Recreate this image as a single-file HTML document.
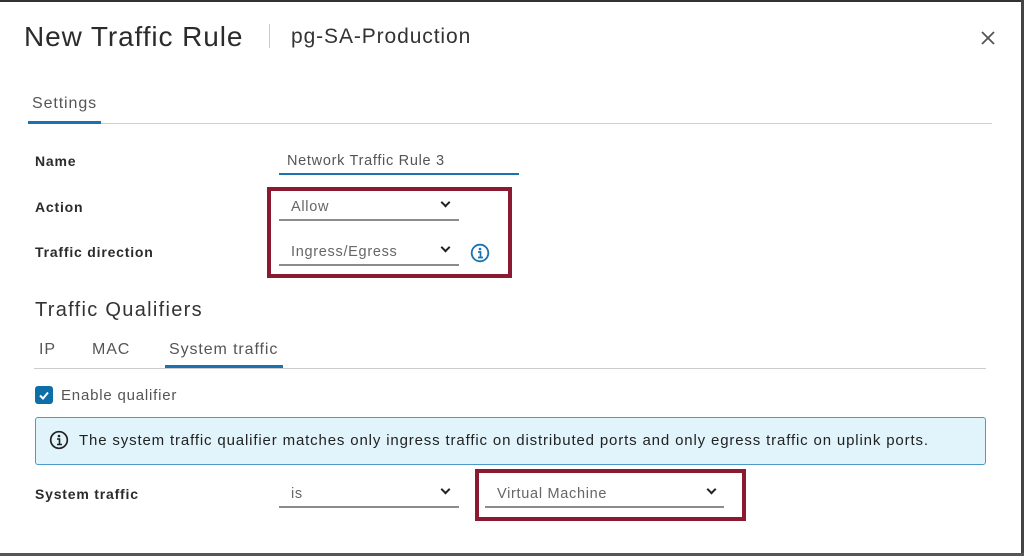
<!DOCTYPE html>
<html><head><style>
*{margin:0;padding:0;box-sizing:border-box}
body{width:1024px;height:556px;background:#fff;font-family:"Liberation Sans",sans-serif;color:#333;position:relative;overflow:hidden}
.a{position:absolute;white-space:nowrap}
.lbl{font-weight:bold;font-size:14px;color:#2b2b2b;letter-spacing:0.8px}
.sel{position:absolute;height:2px;background:#8c8c8c}
.chev{position:absolute;width:7px;height:7px;border-right:2px solid #222;border-bottom:2px solid #222;transform:rotate(45deg)}
.val{font-size:14.5px;color:#666;letter-spacing:0.7px}
</style></head><body>
<div class="a" style="left:0;top:0;width:1024px;height:2px;background:#333"></div>
<div class="a" style="right:0;top:0;width:3px;height:556px;background:#444"></div>
<div class="a" style="left:0;bottom:0;width:1024px;height:3px;background:#555"></div>

<div class="a" style="left:24px;top:21px;font-size:28px;color:#2b2b2b;letter-spacing:0.9px">New Traffic Rule</div>
<div class="a" style="left:269px;top:24px;width:1px;height:24px;background:#ccc"></div>
<div class="a" style="left:291px;top:25px;font-size:21px;color:#333;letter-spacing:0.9px">pg-SA-Production</div>
<svg class="a" style="left:980px;top:30px" width="16" height="16"><path d="M2 2L14 14M14 2L2 14" stroke="#555" stroke-width="1.8"/></svg>

<div class="a" style="left:32px;top:95px;font-size:16px;color:#555;letter-spacing:0.9px">Settings</div>
<div class="a" style="left:28px;top:123px;width:964px;height:1px;background:#c8d3d9"></div>
<div class="a" style="left:28px;top:121px;width:73px;height:3px;background:#1a73b0"></div>

<div class="a lbl" style="left:35px;top:153px">Name</div>
<div class="a val" style="left:287px;top:153px;color:#555">Network Traffic Rule 3</div>
<div class="sel" style="left:279px;top:173px;width:240px;background:#1a73b0"></div>

<div class="a" style="left:267px;top:187px;width:245px;height:91px;border:4px solid #8b1a31"></div>
<div class="a lbl" style="left:35px;top:199px">Action</div>
<div class="a val" style="left:291px;top:199px">Allow</div>
<div class="sel" style="left:279px;top:219px;width:180px"></div>
<div class="chev" style="left:442px;top:199px"></div>

<div class="a lbl" style="left:35px;top:244px">Traffic direction</div>
<div class="a val" style="left:291px;top:244px">Ingress/Egress</div>
<div class="sel" style="left:279px;top:264px;width:180px"></div>
<div class="chev" style="left:442px;top:244px"></div>
<svg class="a" style="left:470px;top:243px" width="20" height="20"><circle cx="10" cy="10" r="8.3" fill="none" stroke="#1a73b0" stroke-width="1.8"/><circle cx="10" cy="6" r="1.3" fill="#1a73b0"/><path d="M8 9h2.5v5M8 14.5h5" stroke="#1a73b0" stroke-width="1.7" fill="none"/></svg>

<div class="a" style="left:35px;top:299px;font-size:20px;color:#333;letter-spacing:1.3px">Traffic Qualifiers</div>
<div class="a" style="left:39px;top:341px;font-size:16px;color:#555;letter-spacing:0.9px">IP</div>
<div class="a" style="left:92px;top:341px;font-size:16px;color:#555;letter-spacing:0.9px">MAC</div>
<div class="a" style="left:169px;top:341px;font-size:16px;color:#555;letter-spacing:0.9px">System traffic</div>
<div class="a" style="left:34px;top:368px;width:952px;height:1px;background:#ccc"></div>
<div class="a" style="left:165px;top:365px;width:118px;height:3px;background:#1a73b0"></div>

<div class="a" style="left:35px;top:386px;width:18px;height:18px;background:#0d6ea8;border-radius:3px"></div>
<svg class="a" style="left:35px;top:386px" width="18" height="18"><path d="M5 9.5l3 3 5-6" stroke="#fff" stroke-width="2" fill="none"/></svg>
<div class="a" style="left:61px;top:387px;font-size:15px;color:#555;letter-spacing:0.8px">Enable qualifier</div>

<div class="a" style="left:35px;top:417px;width:951px;height:48px;background:#e1f4fb;border:1.5px solid #4d9ac8;border-radius:3px"></div>
<svg class="a" style="left:49px;top:430px" width="20" height="20"><circle cx="10" cy="10" r="8.3" fill="none" stroke="#222" stroke-width="1.7"/><circle cx="10" cy="6" r="1.3" fill="#222"/><path d="M8 9h2.5v5M8 14.5h5" stroke="#222" stroke-width="1.6" fill="none"/></svg>
<div class="a" style="left:79px;top:432px;font-size:15px;color:#222;letter-spacing:0.85px">The system traffic qualifier matches only ingress traffic on distributed ports and only egress traffic on uplink ports.</div>

<div class="a lbl" style="left:35px;top:486px">System traffic</div>
<div class="a val" style="left:291px;top:486px">is</div>
<div class="sel" style="left:279px;top:506px;width:180px"></div>
<div class="chev" style="left:442px;top:486px"></div>

<div class="a" style="left:475px;top:469px;width:271px;height:52px;border:4px solid #8b1a31"></div>
<div class="a val" style="left:497px;top:486px">Virtual Machine</div>
<div class="sel" style="left:485px;top:506px;width:239px"></div>
<div class="chev" style="left:708px;top:486px"></div>
</body></html>
